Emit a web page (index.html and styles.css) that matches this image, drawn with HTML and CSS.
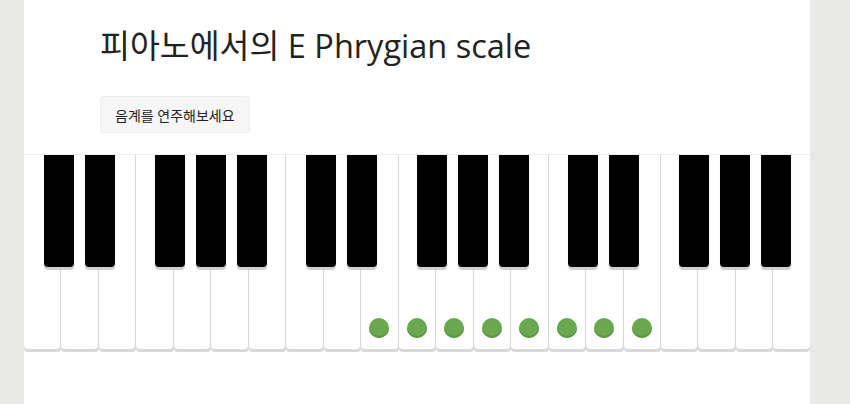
FILE: index.html
```html
<!DOCTYPE html>
<html lang="ko">
<head>
    <meta charset="UTF-8">
    <meta name="viewport" content="width=device-width, initial-scale=1.0">
    <title>피아노에서의 E Phrygian scale</title>
    <link rel="stylesheet" href="styles.css">
</head>
<body>
    <div class="page">
        <div class="header">
            <h1>피아노에서의 E Phrygian scale</h1>
            <button class="play-btn">음계를 연주해보세요</button>
        </div>

        <div class="keyboard">
            <div class="white-keys">
                <div class="white"></div>
                <div class="white"></div>
                <div class="white"></div>
                <div class="white"></div>
                <div class="white"></div>
                <div class="white"></div>
                <div class="white"></div>

                <div class="white"></div>
                <div class="white"></div>
                <div class="white"><span class="dot"></span></div>
                <div class="white"><span class="dot"></span></div>
                <div class="white"><span class="dot"></span></div>
                <div class="white"><span class="dot"></span></div>
                <div class="white"><span class="dot"></span></div>

                <div class="white"><span class="dot"></span></div>
                <div class="white"><span class="dot"></span></div>
                <div class="white"><span class="dot"></span></div>
                <div class="white"></div>
                <div class="white"></div>
                <div class="white"></div>
                <div class="white"></div>
            </div>
            <div class="black-keys">
                <div class="octave">
                    <div class="black cs"></div>
                    <div class="black ds"></div>
                    <div class="black fs"></div>
                    <div class="black gs"></div>
                    <div class="black as"></div>
                </div>
                <div class="octave">
                    <div class="black cs"></div>
                    <div class="black ds"></div>
                    <div class="black fs"></div>
                    <div class="black gs"></div>
                    <div class="black as"></div>
                </div>
                <div class="octave">
                    <div class="black cs"></div>
                    <div class="black ds"></div>
                    <div class="black fs"></div>
                    <div class="black gs"></div>
                    <div class="black as"></div>
                </div>
            </div>
        </div>
    </div>
</body>
</html>
```

FILE: styles.css
```css
body {
    margin: 0;
    background-color: #e9e9e8;
    font-family: "Open Sans", "Noto Sans CJK KR", sans-serif;
    color: #222;
}
.page {
    margin-left: 24px;
    width: 786px;
    min-height: 100vh;
    background-color: #fff;
}
.header {
    padding: 24px 0 0 76px;
}
h1 {
    margin: 0;
    font-size: 32.5px;
    font-weight: 400;
    line-height: 44px;
}
.play-btn {
    margin-top: 28px;
    height: 37px;
    padding: 0 14px;
    font-family: "Open Sans", "Noto Sans CJK KR", sans-serif;
    font-size: 14px;
    color: #222;
    background-color: #f6f6f6;
    border: 1px solid #efefef;
    border-radius: 3px;
}
.keyboard {
    position: relative;
    margin-top: 21px;
    border-top: 1px solid #eee;
}
.white-keys {
    display: flex;
    height: 194px;
}
.white {
    position: relative;
    flex: 1;
    border-right: 1px solid #d6d6d6;
    border-radius: 0 0 4px 4px;
    box-shadow: 0 3px 0 #d9d9d9;
    background-color: #fff;
}
.white:last-child {
    border-right: none;
}
.dot {
    position: absolute;
    left: 50%;
    bottom: 11px;
    width: 20px;
    height: 20px;
    margin-left: -10px;
    border-radius: 50%;
    background-color: #6aa84f;
    box-shadow: inset 0 -2px 0 #5c9643;
}
.black-keys {
    position: absolute;
    top: 0;
    left: 0;
    right: 0;
    display: flex;
}
.octave {
    position: relative;
    flex: 1;
    height: 112px;
}
.black {
    position: absolute;
    top: 0;
    width: 30px;
    height: 112px;
    background-color: #000;
    border-radius: 0 0 4px 4px;
    box-shadow: 0 3px 1px #d0d0d0;
}
.cs { left: 20px; }
.ds { left: 61px; }
.fs { left: 131px; }
.gs { left: 172px; }
.as { left: 213px; }
```
